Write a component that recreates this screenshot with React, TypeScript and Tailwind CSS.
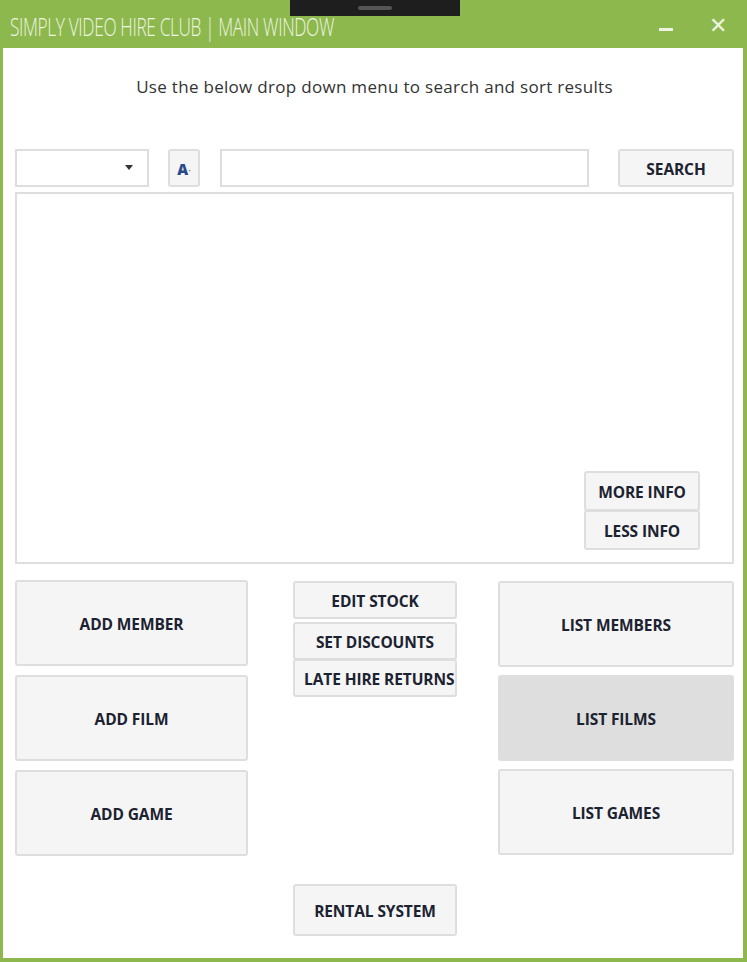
import React from "react";

const btnBase =
  "flex items-center justify-center pt-[3px] border-2 border-[#dedede] rounded-[3px] text-[15.5px] font-bold tracking-[-0.1px] text-[#1c2230] whitespace-nowrap overflow-hidden";

function Btn({
  label,
  className = "",
  active = false,
}: {
  label: string;
  className?: string;
  active?: boolean;
}) {
  return (
    <div className={`${btnBase} ${active ? "bg-[#dedede]" : "bg-[#f5f5f5]"} ${className}`}>
      {label}
    </div>
  );
}

export default function App() {
  return (
    <div
      className="w-[747px] h-[962px] bg-[#8db84d] flex flex-col relative"
      style={{ fontFamily: '"Open Sans", "Noto Sans", sans-serif' }}
    >
      {/* notch overlay */}
      <div className="absolute left-[290px] top-0 w-[170px] h-[16px] bg-[#1e1e1e] flex justify-center items-start pt-[6px]">
        <div className="w-[34px] h-[4px] bg-[#555] rounded-sm" />
      </div>

      {/* title bar */}
      <div className="h-[48px] flex items-center pl-[10px] pr-[20px] shrink-0">
        <div className="w-[330px] overflow-visible">
          <div className="text-[25px] font-light text-[#eef4e2] tracking-[-0.5px] leading-none pt-[4px] whitespace-nowrap origin-left scale-x-[0.69]">
            SIMPLY VIDEO HIRE CLUB | MAIN WINDOW
          </div>
        </div>
        <div className="flex-1" />
        <div className="w-[14px] h-[3px] bg-[#eef4e2] mt-[10px] mr-[36px]" />
        <div className="text-[22px] font-light text-[#eef4e2] leading-none">✕</div>
      </div>

      {/* content */}
      <div className="flex-1 ml-[3px] mr-[4px] mb-[4px] bg-white flex flex-col pl-[12px] pr-[9px]">
        <div className="h-[101px] flex justify-center pt-[26px] text-[17px] text-[#333] tracking-[0.3px]">
          Use the below drop down menu to search and sort results
        </div>

        {/* search row */}
        <div className="flex items-center h-[38px]">
          <div className="w-[134px] h-[38px] border-2 border-[#dedede] bg-white flex items-center justify-end pr-[14px]">
            <svg width="8" height="6" viewBox="0 0 8 6">
              <path d="M0 0 L8 0 L4 5 Z" fill="#333" />
            </svg>
          </div>
          <div className="w-[32px] h-[38px] ml-[19px] bg-[#f5f5f5] border-2 border-[#dedede] rounded-[3px] flex items-center justify-center pt-[3px]">
            <span className="text-[15px] font-extrabold text-[#2a4a8a] leading-none">A</span>
            <span className="text-[10px] text-[#666] leading-none">·</span>
          </div>
          <div className="w-[369px] h-[38px] ml-[20px] border-2 border-[#dedede] bg-white" />
          <div className="flex-1" />
          <Btn label="SEARCH" className="w-[116px] h-[38px]" />
        </div>

        {/* list box */}
        <div className="mt-[5px] h-[372px] border-2 border-[#dedede] bg-white flex flex-col items-end justify-end pr-[32px] pb-[12px]">
          <Btn label="MORE INFO" className="w-[116px] h-[40px]" />
          <Btn label="LESS INFO" className="w-[116px] h-[40px] -mt-[1px]" />
        </div>

        {/* bottom buttons */}
        <div className="flex mt-[16px]">
          <div className="w-[233px] flex flex-col gap-[9px]">
            <Btn label="ADD MEMBER" className="h-[86px]" />
            <Btn label="ADD FILM" className="h-[86px]" />
            <Btn label="ADD GAME" className="h-[86px]" />
          </div>
          <div className="w-[164px] ml-[45px] flex flex-col pt-[1px]">
            <Btn label="EDIT STOCK" className="h-[38px]" />
            <Btn label="SET DISCOUNTS" className="h-[38px] mt-[3px]" />
            <Btn label="LATE HIRE RETURNS" className="h-[38px] -mt-[1px] justify-start pl-[9px]" />
            <div className="flex-1" />
            <Btn label="RENTAL SYSTEM" className="h-[52px] -mb-[80px]" />
          </div>
          <div className="w-[236px] ml-[41px] flex flex-col gap-[8px] pt-[1px]">
            <Btn label="LIST MEMBERS" className="h-[86px]" />
            <Btn label="LIST FILMS" className="h-[86px]" active />
            <Btn label="LIST GAMES" className="h-[86px]" />
          </div>
        </div>
      </div>
    </div>
  );
}
